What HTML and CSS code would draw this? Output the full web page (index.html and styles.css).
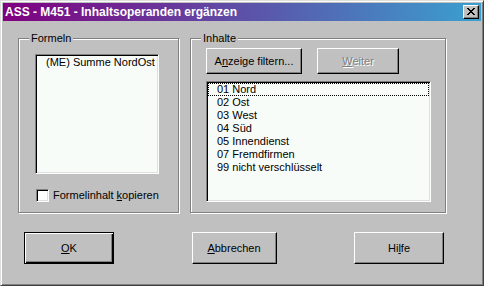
FILE: index.html
```html
<!DOCTYPE html>
<html lang="de">
<head>
    <meta charset="UTF-8">
    <title>ASS - M451 - Inhaltsoperanden ergänzen</title>
    <link rel="stylesheet" href="styles.css">
</head>
<body>

<div class="window">
    <!-- Titelleiste -->
    <div class="titlebar">
        <span class="title">ASS - M451 - Inhaltsoperanden ergänzen</span>
        <button class="close-btn" title="Schließen">
            <svg width="8" height="7" viewBox="0 0 8 7" shape-rendering="crispEdges">
                <path d="M0 0h2v1H0zM6 0h2v1H6zM1 1h2v1H1zM5 1h2v1H5zM2 2h4v1H2zM3 3h2v1H3zM2 4h4v1H2zM1 5h2v1H1zM5 5h2v1H5zM0 6h2v1H0zM6 6h2v1H6z" fill="#000"/>
            </svg>
        </button>
    </div>

    <div class="content">
        <div class="groups">
            <!-- Formeln -->
            <div class="group group-formeln">
                <div class="group-title">Formeln</div>
                <ul class="listbox listbox-formeln">
                    <li class="item">(ME) Summe NordOst</li>
                </ul>
                <label class="check">
                    <span class="checkbox"></span>
                    <span>Formelinhalt <u>k</u>opieren</span>
                </label>
            </div>

            <!-- Inhalte -->
            <div class="group group-inhalte">
                <div class="group-title">Inhalte</div>
                <div class="group-buttons">
                    <button class="btn btn-filter">A<u>n</u>zeige filtern...</button>
                    <button class="btn btn-weiter" disabled><u>W</u>eiter</button>
                </div>
                <ul class="listbox listbox-inhalte">
                    <li class="item focused">01 Nord</li>
                    <li class="item">02 Ost</li>
                    <li class="item">03 West</li>
                    <li class="item">04 Süd</li>
                    <li class="item">05 Innendienst</li>
                    <li class="item">07 Fremdfirmen</li>
                    <li class="item">99 nicht verschlüsselt</li>
                </ul>
            </div>
        </div>

        <!-- Dialog-Schaltflächen -->
        <div class="dialog-buttons">
            <button class="btn btn-dialog btn-default"><u>O</u>K</button>
            <button class="btn btn-dialog btn-cancel"><u>A</u>bbrechen</button>
            <button class="btn btn-dialog">Hi<u>l</u>fe</button>
        </div>
    </div>
</div>

</body>
</html>
```

FILE: styles.css
```css
body {
    margin: 0;
    padding: 0;
    font-family: "Liberation Sans", Arial, sans-serif;
    font-size: 11px;
    color: #000;
    background: #c0c0c0;
}

.window {
    width: 484px;
    height: 286px;
    box-sizing: border-box;
    padding: 2px;
    background: #c0c0c0;
    border: 1px solid;
    border-color: #dfdfdf #404040 #404040 #dfdfdf;
    box-shadow: inset 1px 1px 0 #fff, inset -1px -1px 0 #808080;
}

/* Titelleiste */
.titlebar {
    height: 18px;
    display: flex;
    align-items: center;
    justify-content: space-between;
    padding: 0 2px;
    background: linear-gradient(to right, #800080, #3aa0d0);
}

.title {
    color: #fff;
    font-weight: bold;
    font-size: 12px;
    line-height: 13px;
}

.close-btn {
    width: 16px;
    height: 14px;
    padding: 0 0 1px 0;
    display: flex;
    align-items: center;
    justify-content: center;
    background: #c0c0c0;
    border: 1px solid;
    border-color: #fff #000 #000 #fff;
    box-shadow: inset -1px -1px 0 #808080;
}

/* Inhalt */
.content {
    padding: 17px 15px 0 15px;
}

.groups {
    display: flex;
    gap: 11px;
}

.group {
    height: 175px;
    box-sizing: border-box;
    border: 1px solid #808080;
    box-shadow: 1px 1px 0 #fff, inset 1px 1px 0 #fff;
}

.group-formeln {
    width: 161px;
}

.group-inhalte {
    width: 256px;
}

.group-title {
    width: fit-content;
    margin: -7px 0 0 10px;
    padding: 0 2px;
    line-height: 13px;
    background: #c0c0c0;
}

/* Listenfelder */
.listbox {
    list-style: none;
    margin: 0;
    box-sizing: border-box;
    background: #f8fcf8;
    border: 1px solid;
    border-color: #808080 #fff #fff #808080;
    box-shadow: inset 1px 1px 0 #000, inset -1px -1px 0 #dfdfdf;
    padding: 1px;
}

.listbox-formeln {
    width: 124px;
    height: 120px;
    margin: 9px 0 0 16px;
}

.listbox-inhalte {
    width: 225px;
    height: 121px;
    margin: 7px 0 0 15px;
}

.item {
    line-height: 13px;
    padding-left: 9px;
    white-space: nowrap;
}

.item.focused {
    outline: 1px dotted #000;
    outline-offset: -1px;
}

/* Checkbox */
.check {
    display: flex;
    align-items: center;
    gap: 4px;
    margin: 15px 0 0 17px;
    line-height: 13px;
}

.checkbox {
    width: 13px;
    height: 13px;
    box-sizing: border-box;
    background: #fff;
    border: 1px solid;
    border-color: #808080 #fff #fff #808080;
    box-shadow: inset 1px 1px 0 #000, inset -1px -1px 0 #dfdfdf;
}

/* Schaltflächen */
.btn {
    font-family: inherit;
    font-size: 11px;
    line-height: 13px;
    padding: 0;
    color: #000;
    background: #c0c0c0;
    box-sizing: border-box;
    border: 1px solid;
    border-color: #fff #000 #000 #fff;
    box-shadow: inset -1px -1px 0 #808080;
}

.group-buttons {
    display: flex;
    gap: 15px;
    margin: 3px 0 0 15px;
}

.btn-filter {
    width: 96px;
    height: 26px;
}

.btn-weiter {
    width: 82px;
    height: 26px;
    color: #808080;
    text-shadow: 1px 1px 0 #fff;
}

.dialog-buttons {
    display: flex;
    justify-content: space-between;
    margin-top: 19px;
    padding: 0 22px 0 6px;
}

.btn-dialog {
    width: 90px;
    height: 32px;
}

.btn-cancel {
    width: 85px;
}

.btn-default {
    border-color: #000;
    box-shadow: inset 1px 1px 0 #fff, inset -1px -1px 0 #000, inset -2px -2px 0 #808080;
}
```
